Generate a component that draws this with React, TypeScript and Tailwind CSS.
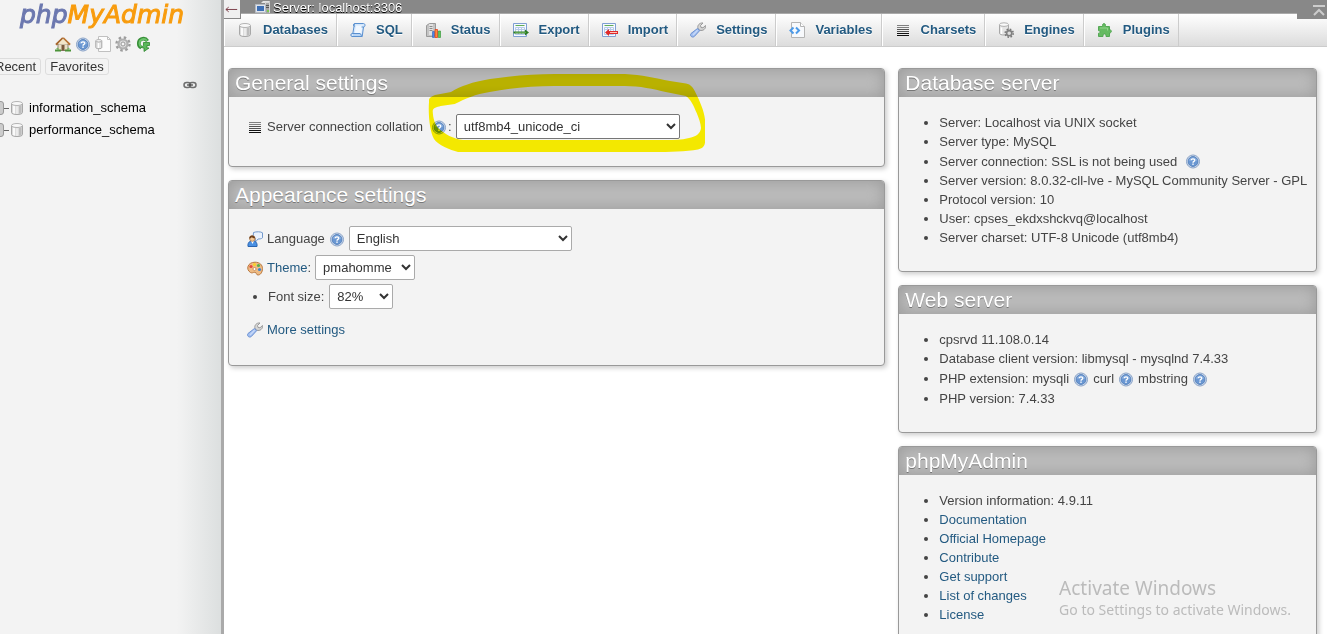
import type { ReactNode } from "react";

type IconProps = { className?: string };

function Svg({ className = "size-4", children }: IconProps & { children: ReactNode }) {
  return (
    <svg viewBox="0 0 16 16" className={`${className} shrink-0`} fill="none" aria-hidden="true">
      {children}
    </svg>
  );
}

function HelpIcon({ className }: IconProps) {
  return (
    <Svg className={className}>
      <circle cx="8" cy="8.500" r="6.500" fill="#dfe8f4" stroke="#86a0c6" />
      <circle cx="8" cy="8.500" r="5" fill="#6a97d2" stroke="#4a77b4" strokeWidth="0.8" />
      <path d="M3.600 8a4.500 4.500 0 0 1 8.800 0c-3-1-6-1-8.800 0z" fill="#93b5e2" opacity="0.7" />
      <path d="M6.200 7.300c0-2 3.600-2 3.600 0C9.800 8.500 8 8.300 8 9.700" stroke="#fff" strokeWidth="1.300" />
      <rect x="7.300" y="10.500" width="1.400" height="1.400" fill="#fff" />
    </Svg>
  );
}

function DatabaseIcon({ className }: IconProps) {
  return (
    <Svg className={className}>
      <path d="M2.500 3.500v9c0 2.700 11 2.700 11 0v-9" fill="#dcdcdc" stroke="#a8a8a8" />
      <path d="M4 5.500v7.500l2 .7V6zM7.500 6.200v7.700h1V6.200z" fill="#fafafa" />
      <path d="M10 6v7.700l2.500-.8V5.200z" fill="#bdbdbd" />
      <ellipse cx="8" cy="3.500" rx="5.500" ry="2" fill="#f8f8f8" stroke="#b4b4b4" />
    </Svg>
  );
}

function HomeIcon() {
  return (
    <Svg>
      <path d="M3 8h10v6.500H3z" fill="#eadfc6" stroke="#8b8370" />
      <path d="M8 2L1 8.800" stroke="#a6652c" strokeWidth="2.200" />
      <path d="M8 2l7 6.800" stroke="#b87536" strokeWidth="2.200" />
      <path d="M8 2.800L3.500 7.200v1h9v-1z" fill="#f2e6c9" />
      <path d="M6.500 14.500V9h3v5.500z" fill="#7a5a3c" />
      <path d="M0 14.500h6M10 14.500h6" stroke="#4c9439" strokeWidth="2" />
      <path d="M1 13l1.500-1.500L4 13M12 13l1.500-1.500L15 13" fill="#76b85b" />
    </Svg>
  );
}

function DocsIcon() {
  return (
    <Svg>
      <path d="M3.500.5h9l3 3v12h-12z" fill="#fcfcfc" stroke="#c0c0c0" />
      <path d="M12.500.5v3h3" stroke="#c0c0c0" />
      <path d="M.8 5v6.500c0 1.600 6 1.600 6 0V5" fill="#e6e6e6" stroke="#a5a5a5" />
      <ellipse cx="3.800" cy="4.800" rx="3" ry="1.200" fill="#f8f8f8" stroke="#b0b0b0" />
      <path d="M3.500 7v5" stroke="#fff" />
    </Svg>
  );
}

function GearIcon() {
  return (
    <Svg>
      <circle cx="8" cy="8" r="6.500" stroke="#9d9d9d" strokeWidth="2.400" strokeDasharray="2.500 2.600" />
      <circle cx="8" cy="8" r="4.500" fill="#ddd" stroke="#b0b0b0" strokeWidth="2.200" />
      <circle cx="8" cy="8" r="2" fill="#f6f6f6" stroke="#999" />
    </Svg>
  );
}

function ReloadIcon() {
  return (
    <Svg>
      <path d="M12.500 5C11 2.800 8.500 2.200 6.300 3.200c-3.400 1.700-3.400 6.800 0 8.500" stroke="#389038" strokeWidth="3.600" />
      <path d="M12 4.800C10.700 3 8.500 2.600 6.500 3.600c-2.800 1.500-2.800 5.800 0 7.400" stroke="#6cc46c" strokeWidth="1.800" />
      <path d="M8.500 6.500h6v3h-2.500V12l2 0-5 3.500V12l-3-.5 2.500-2z" fill="#5cb85c" stroke="#2f862f" strokeWidth="0.800" />
    </Svg>
  );
}

function ChainIcon() {
  return (
    <svg viewBox="0 0 14 8" className="h-2 w-3.5" fill="none" aria-hidden="true">
      <rect x="1" y="1.500" width="6.500" height="5" rx="2.500" stroke="#6e6e6e" strokeWidth="1.500" />
      <rect x="6.500" y="1.500" width="6.500" height="5" rx="2.500" stroke="#6e6e6e" strokeWidth="1.500" />
      <path d="M4 4h6" stroke="#444" strokeWidth="1.200" />
    </svg>
  );
}

function ServerIcon() {
  return (
    <Svg>
      <path d="M6 3l2-2h7l-1 2z" fill="#e3e3e3" />
      <path d="M10.500 2.500h4v12h-4z" fill="#a5a5a5" stroke="#d6d6d6" />
      <path d="M11 5.500h3M11 7.500h3" stroke="#555" />
      <path d="M12 10h2v2h-2z" fill="#7bc950" />
      <path d="M.5 4.500h10v8H.5z" fill="#dfe4ec" stroke="#b5bac2" />
      <path d="M2 6h7v5H2z" fill="#3d6fb5" />
      <path d="M2 14.500h7" stroke="#ccc" strokeWidth="1.500" />
    </Svg>
  );
}

function SqlIcon() {
  return (
    <Svg>
      <path d="M4.500 1.500h9c2 0 2 3.500 0 3.500l-1.300 9.500H2c-1.500 0-1.500-3 0-3h.8z" fill="#d3e6fb" stroke="#5a90d0" />
      <path d="M6 3.500h6.500l-1.300 8.500H4.700z" fill="#f0f7ff" />
      <path d="M4.500 1.500c-1.500.5-1.500 2.500 0 3M13.500 5H11.500" stroke="#5a90d0" />
      <path d="M2.500 11.500h7.500c1.500 0 .5 3 2.200 3" stroke="#5a90d0" />
      <path d="M3 13h7" stroke="#9cc3ee" />
    </Svg>
  );
}

function StatusIcon() {
  return (
    <Svg>
      <path d="M1.500 3.500l3-2h6v11l-2 2h-7z" fill="#c4c4c4" stroke="#999" />
      <path d="M4 2v11h4V2z" fill="#e1e1e1" />
      <path d="M4.500 4.500h3M4.500 6.500h3M4.500 8.500h3" stroke="#8a8a8a" />
      <path d="M7.500 9.500h2v6h-2z" fill="#4a86e8" stroke="#2d62b8" strokeWidth="0.600" />
      <path d="M10 7.500h2.500v8H10z" fill="#ff8a3a" stroke="#e2401b" strokeWidth="0.800" />
      <path d="M13.300 9h2.200v6.500h-2.200z" fill="#5fc35f" stroke="#2c922c" strokeWidth="0.600" />
    </Svg>
  );
}

function SheetIcon({ children }: { children: ReactNode }) {
  return (
    <Svg>
      <path d="M.5 1.500h13v13H.5z" fill="#f6f9ff" stroke="#7f9fd2" />
      <path d="M2.500 3.500h9" stroke="#62ad55" />
      <path d="M2.500 5.500h9v7h-9zM2.500 7.500h9M5.500 5.500v7M8.500 5.500v7" stroke="#b6cae8" />
      {children}
    </Svg>
  );
}

function ExportIcon() {
  return (
    <SheetIcon>
      <path d="M.5 9.500H12V7.500l4 3-4 3v-2H.5z" fill="#2d7d21" />
      <path d="M2 10.500h11" stroke="#7cc06a" strokeWidth="0.600" />
    </SheetIcon>
  );
}

function ImportIcon() {
  return (
    <SheetIcon>
      <path d="M16 9H7V7l-4 3.500L7 14v-2h9z" fill="#e02a2a" />
      <path d="M8 10.500h7" stroke="#ffc3bb" />
    </SheetIcon>
  );
}

function WrenchIcon() {
  return (
    <Svg>
      <path d="M8 6.500C7 3.500 9.500.5 13 1l-2.500 2.500.5 2 2 .3L15.500 3.500C16 7 13 9.200 9.800 8.200z" fill="#d6d6d6" stroke="#999" />
      <path d="M7.500 6.500l2.300 2-5.500 6c-2 1.700-5-.8-3.300-3z" fill="#9fbdf0" stroke="#6c90d0" />
      <path d="M7.500 8.300L3 13" stroke="#c6d8f8" strokeWidth="1.500" />
    </Svg>
  );
}

function VariablesIcon() {
  return (
    <Svg>
      <path d="M2.500.5h9l4 4v11h-13z" fill="#f7f9fc" stroke="#b4b4b4" />
      <path d="M11.500.5v4h4" fill="#fff" stroke="#b4b4b4" />
      <path d="M4.500 5.500L1.500 8.500l3 3M7 5.500l3 3-3 3" stroke="#4c9ae8" strokeWidth="2" />
    </Svg>
  );
}

function CharsetsIcon() {
  return (
    <Svg>
      <path d="M2 3.500h12M2 5.500h12" stroke="#808080" />
      <path d="M2 7.500h12M2 9.500h12" stroke="#555" />
      <path d="M2 11.500h12M2 13.500h12" stroke="#111" />
    </Svg>
  );
}

function EnginesIcon() {
  return (
    <Svg>
      <path d="M1.500 2.800v8.500c0 2.300 9 2.300 9 0V2.800" fill="#e4e4e4" stroke="#a8a8a8" />
      <ellipse cx="6" cy="2.600" rx="4.500" ry="1.800" fill="#fafafa" stroke="#b0b0b0" />
      <path d="M3.500 5.500v6.500" stroke="#fff" strokeWidth="1.500" />
      <circle cx="11.200" cy="11.200" r="4" stroke="#777" strokeWidth="1.600" strokeDasharray="1.600 1.550" />
      <circle cx="11.200" cy="11.200" r="2.600" fill="#ddd" stroke="#808080" strokeWidth="1.600" />
    </Svg>
  );
}

function PluginsIcon() {
  return (
    <Svg>
      <path
        d="M1.500 4.500h4v-1c-.5-2.500 3.500-2.500 3 0v1h4v3.500c2.500-.8 2.500 3.300 0 2.800v3.700H9v-1.500c0-1.500-3-1.500-3 0v1.500H1.500v-3.300c2.200.3 2.200-2.700 0-2.500z"
        fill="#66bb62"
        stroke="#55a855"
      />
      <path d="M3 6h7.500v2.500" stroke="#93d48c" />
    </Svg>
  );
}

function LanguageIcon() {
  return (
    <Svg>
      <path d="M6.500 1.500C9 .5 14 .5 15.500 1.800v5C14.500 8 12 8 11 8l-2.500 3-.3-3.500L6 6.500z" fill="#eaf2fd" stroke="#7299cc" />
      <path d="M1 15.500C.5 11 3 10 5.500 10s5 1 4.500 5.500z" fill="#4a90e2" stroke="#2a64b0" />
      <path d="M4 10l1.500 3L7 10z" fill="#fff" />
      <circle cx="5.300" cy="7.500" r="2.800" fill="#f4c998" stroke="#a06a3c" strokeWidth="0.700" />
      <path d="M2.300 7.500c-.3-4 5.500-4 6 0-2-.2-3-.8-3.500-1.500-.5 1-1.500 1.500-2.500 1.500z" fill="#6b3f1d" />
    </Svg>
  );
}

function ThemeIcon() {
  return (
    <Svg>
      <path d="M8 2.200c5 0 7.500 3 7.500 6.300 0 3.700-2 6.500-4.500 6.500-2 0-1.200-2.700-3.200-2.700S5.500 13.500 3.500 12.500C-1.500 9.500.5 2.200 8 2.200z" fill="#eebb84" stroke="#b9783f" />
      <circle cx="4" cy="6.500" r="1.600" fill="#e6483b" />
      <circle cx="7.500" cy="4.500" r="1.600" fill="#f6d12c" />
      <circle cx="11.500" cy="5.500" r="1.600" fill="#57b04b" />
      <circle cx="12.500" cy="9.500" r="1.600" fill="#3c82d2" />
      <circle cx="7.500" cy="9" r="1.500" fill="#fff" stroke="#b9783f" strokeWidth="0.700" />
    </Svg>
  );
}

const tabs = [
  { label: "Databases", icon: <DatabaseIcon /> },
  { label: "SQL", icon: <SqlIcon /> },
  { label: "Status", icon: <StatusIcon /> },
  { label: "Export", icon: <ExportIcon /> },
  { label: "Import", icon: <ImportIcon /> },
  { label: "Settings", icon: <WrenchIcon /> },
  { label: "Variables", icon: <VariablesIcon /> },
  { label: "Charsets", icon: <CharsetsIcon /> },
  { label: "Engines", icon: <EnginesIcon /> },
  { label: "Plugins", icon: <PluginsIcon /> },
];

const databases = ["information_schema", "performance_schema"];

const projectLinks = [
  "Documentation",
  "Official Homepage",
  "Contribute",
  "Get support",
  "List of changes",
  "License",
];

function HelpLink({ label }: { label: string }) {
  return (
    <a href="#help" aria-label={label} className="inline-flex">
      <HelpIcon />
    </a>
  );
}

function Panel({ title, children }: { title: string; children: ReactNode }) {
  return (
    <section className="relative rounded-[4px] border border-[#999] bg-[#f3f3f3] shadow-[2px_2px_5px_#ccc]">
      <h2 className="h-7 rounded-t-[3px] bg-[#bbb] pl-1.5 text-[21px] leading-7 text-white shadow-[inset_0_0_15px_#999] [text-shadow:0_1px_0_#777]">
        {title}
      </h2>
      {children}
    </section>
  );
}

function InfoList({ children }: { children: ReactNode }) {
  return <ul className="list-disc pt-4 pb-6 pl-10 leading-[19px] whitespace-nowrap">{children}</ul>;
}

function Sidebar() {
  return (
    <aside className="w-56 shrink-0 overflow-hidden border-r-[3px] border-[#aaa] bg-[linear-gradient(to_right,#f3f3f3_80%,#dcdfdf)]">
      <a
        href="#home"
        className="block h-7 pl-5 font-['DejaVu_Sans',sans-serif] text-[25px] leading-[30px] text-[#6c78af] italic [-webkit-text-stroke:1px]"
      >
        php<span className="text-[#f89c0e]">MyAdmin</span>
      </a>
      <nav className="mt-2 flex gap-1 pl-[55px]">
        <a href="#home" aria-label="Home"><HomeIcon /></a>
        <a href="#docs" aria-label="phpMyAdmin documentation"><HelpIcon /></a>
        <a href="#manual" aria-label="Documentation"><DocsIcon /></a>
        <a href="#settings" aria-label="Navigation panel settings"><GearIcon /></a>
        <a href="#reload" aria-label="Reload navigation panel"><ReloadIcon /></a>
      </nav>
      <div className="mt-1.5 -ml-2.5 flex gap-1 text-[#333]">
        <button className="h-[17px] rounded-[3px] border border-[#ddd] px-1 leading-[15px]">Recent</button>
        <button className="h-[17px] rounded-[3px] border border-[#ddd] px-1 leading-[15px]">Favorites</button>
      </div>
      <div className="mt-1.5 flex justify-end pr-6">
        <button aria-label="Unlink from main panel">
          <ChainIcon />
        </button>
      </div>
      <ul className="mt-2 text-black">
        {databases.map((name) => (
          <li key={name} className="-ml-1.5 flex h-[22px] items-center">
            <button
              aria-label={`Expand ${name}`}
              className="h-3.5 w-2.5 rounded-[3px] border border-[#999] bg-[#ccc]"
            />
            <span className="h-px w-[5px] bg-[#666]" />
            <DatabaseIcon />
            <a href="#database" className="ml-1">{name}</a>
          </li>
        ))}
      </ul>
    </aside>
  );
}

// hand-drawn highlighter loop around the collation select
function Marker() {
  return (
    <svg
      viewBox="0 0 300 100"
      className="pointer-events-none absolute -top-1 left-[191px] h-[100px] w-[300px] mix-blend-multiply"
      aria-hidden="true"
    >
      <path
        fill="#fff400"
        fillRule="evenodd"
        d="M9 35c0-2 3-4 6-5l16-3C41 21 52 17 70 14c22-3 42-5 65-5h70c17 1 30 4 45 7l16 2.500c5 1 7 4 9 8 5 10 9 19 10 28v23c-.5 4-3 6-7 7-12 2-28 2.500-45 2.500H38c-8-2-20-7-24-13-4-7-6-24-5-37zM12.700 46c.3-3 4-4 8-5l14-2c10-5 21-10 35-12 22-4 42-6 65-6h70c15 0 29 3 41 6l20 4c5 3 8 10 11 17 2 5 4 10 4.300 15-.5 6-6 9-12 10-8 2-15 2-23 2H43c-10-1-18-6-25-12-3-4-5-9-5.300-17z"
      />
    </svg>
  );
}

export default function App() {
  return (
    <div className="flex h-screen overflow-hidden bg-white font-['Liberation_Sans',Arial,sans-serif] text-[13px] text-[#444]">
      <Sidebar />
      <main className="relative min-w-0 flex-1">
        <header className="h-[13px] bg-[#888]">
          <a
            href="#server"
            className="flex items-start gap-0.5 pl-[31px] leading-4 text-white [text-shadow:0_1px_0_#000]"
          >
            <span className="h-[13px] overflow-hidden">
              <ServerIcon />
            </span>
            Server: localhost:3306
          </a>
        </header>
        <button
          aria-label="Hide panel"
          className="absolute top-0 left-0 h-[19px] w-[17px] border-r border-b border-[#888] bg-[#f0f0f0]"
        >
          <svg viewBox="0 0 17 18" className="h-[18px] w-4" fill="none" stroke="#7a3a44" aria-hidden="true">
            <path d="M2 9.500h12M5 7L2 9.500 5 12" />
          </svg>
        </button>
        <button aria-label="Scroll to top" className="absolute top-0 right-0 h-[19px] w-[30px] bg-[#888] pl-4">
          <svg viewBox="0 0 12 12" className="size-3" fill="none" stroke="#ccc" strokeWidth="2" aria-hidden="true">
            <path d="M0 2h12M1 11l5-5 5 5" />
          </svg>
        </button>

        <nav className="flex h-[34px] border-t border-b border-t-[#aaa] border-b-[#ccc] bg-linear-to-b from-white to-[#dcdcdc]">
          {tabs.map((tab) => (
            <a
              key={tab.label}
              href="#tab"
              className="flex items-center gap-2.5 border-r border-l border-r-[#ccc] border-l-white pr-2 pl-3 font-bold text-[#235a81] [text-shadow:0_1px_0_#fff]"
            >
              {tab.icon}
              {tab.label}
            </a>
          ))}
        </nav>

        <div className="grid grid-cols-[1.57fr_1fr] items-start gap-[13px] pt-[21px] pr-2.5 pl-1">
          <div className="flex flex-col gap-[13px]">
            <Panel title="General settings">
              <form className="flex items-center gap-1 pt-[17px] pb-[27px] pl-[18px]">
                <CharsetsIcon />
                <label htmlFor="collation">Server connection collation</label>
                <span className="ml-1 flex items-center gap-px">
                  <HelpLink label="Collation help" />:
                </span>
                <select
                  id="collation"
                  className="h-[25px] w-56 rounded-[2px] border border-[#767676] bg-white pl-[3px] text-[#333]"
                >
                  <option>utf8mb4_unicode_ci</option>
                </select>
              </form>
              <Marker />
            </Panel>

            <Panel title="Appearance settings">
              <form className="flex flex-col gap-1 pt-[17px] pb-[27px] pl-[18px]">
                <div className="flex items-center gap-1">
                  <LanguageIcon />
                  <label htmlFor="language">Language</label>
                  <HelpLink label="Language help" />
                  <select
                    id="language"
                    className="h-[25px] w-[223px] rounded-[2px] border border-[#aaa] bg-white pl-[3px] text-[#333]"
                  >
                    <option>English</option>
                  </select>
                </div>
                <div className="flex items-center gap-1">
                  <ThemeIcon />
                  <label htmlFor="theme">
                    <a href="#themes" className="text-[#235a81]">Theme</a>:
                  </label>
                  <select
                    id="theme"
                    className="h-[25px] w-[100px] rounded-[2px] border border-[#aaa] bg-white pl-[3px] text-[#333]"
                  >
                    <option>pmahomme</option>
                  </select>
                </div>
                <ul className="list-disc pl-[21px]">
                  <li>
                    <div className="flex items-center gap-[5px]">
                      <label htmlFor="fontsize">Font size:</label>
                      <select
                        id="fontsize"
                        className="h-[25px] w-16 rounded-[2px] border border-[#aaa] bg-white pl-[3px] text-[#333]"
                      >
                        <option>82%</option>
                      </select>
                    </div>
                  </li>
                </ul>
                <a href="#more" className="mt-2 flex h-[17px] items-center gap-1 text-[#235a81]">
                  <WrenchIcon />
                  More settings
                </a>
              </form>
            </Panel>
          </div>

          <div className="flex flex-col gap-[13px]">
            <Panel title="Database server">
              <InfoList>
                <li>Server: Localhost via UNIX socket</li>
                <li>Server type: MySQL</li>
                <li>
                  <span className="flex h-5 items-center gap-2">
                    Server connection: SSL is not being used
                    <HelpLink label="SSL help" />
                  </span>
                </li>
                <li>Server version: 8.0.32-cll-lve - MySQL Community Server - GPL</li>
                <li>Protocol version: 10</li>
                <li>User: cpses_ekdxshckvq@localhost</li>
                <li>Server charset: UTF-8 Unicode (utf8mb4)</li>
              </InfoList>
            </Panel>

            <Panel title="Web server">
              <InfoList>
                <li>cpsrvd 11.108.0.14</li>
                <li>Database client version: libmysql - mysqlnd 7.4.33</li>
                <li>
                  <span className="flex h-[21px] items-center gap-1">
                    PHP extension: mysqli <HelpLink label="mysqli help" />
                    curl <HelpLink label="curl help" />
                    mbstring <HelpLink label="mbstring help" />
                  </span>
                </li>
                <li>PHP version: 7.4.33</li>
              </InfoList>
            </Panel>

            <Panel title="phpMyAdmin">
              <InfoList>
                <li>Version information: 4.9.11</li>
                {projectLinks.map((link) => (
                  <li key={link}>
                    <a href="#project" className="text-[#235a81]">{link}</a>
                  </li>
                ))}
              </InfoList>
            </Panel>
          </div>
        </div>
      </main>

      <div className="pointer-events-none fixed right-9 bottom-3.5 font-['Noto_Sans','Open_Sans',sans-serif] text-[#bbb]">
        <p className="text-[19px] leading-6">Activate Windows</p>
        <p className="text-[14px] leading-5">Go to Settings to activate Windows.</p>
      </div>
    </div>
  );
}
